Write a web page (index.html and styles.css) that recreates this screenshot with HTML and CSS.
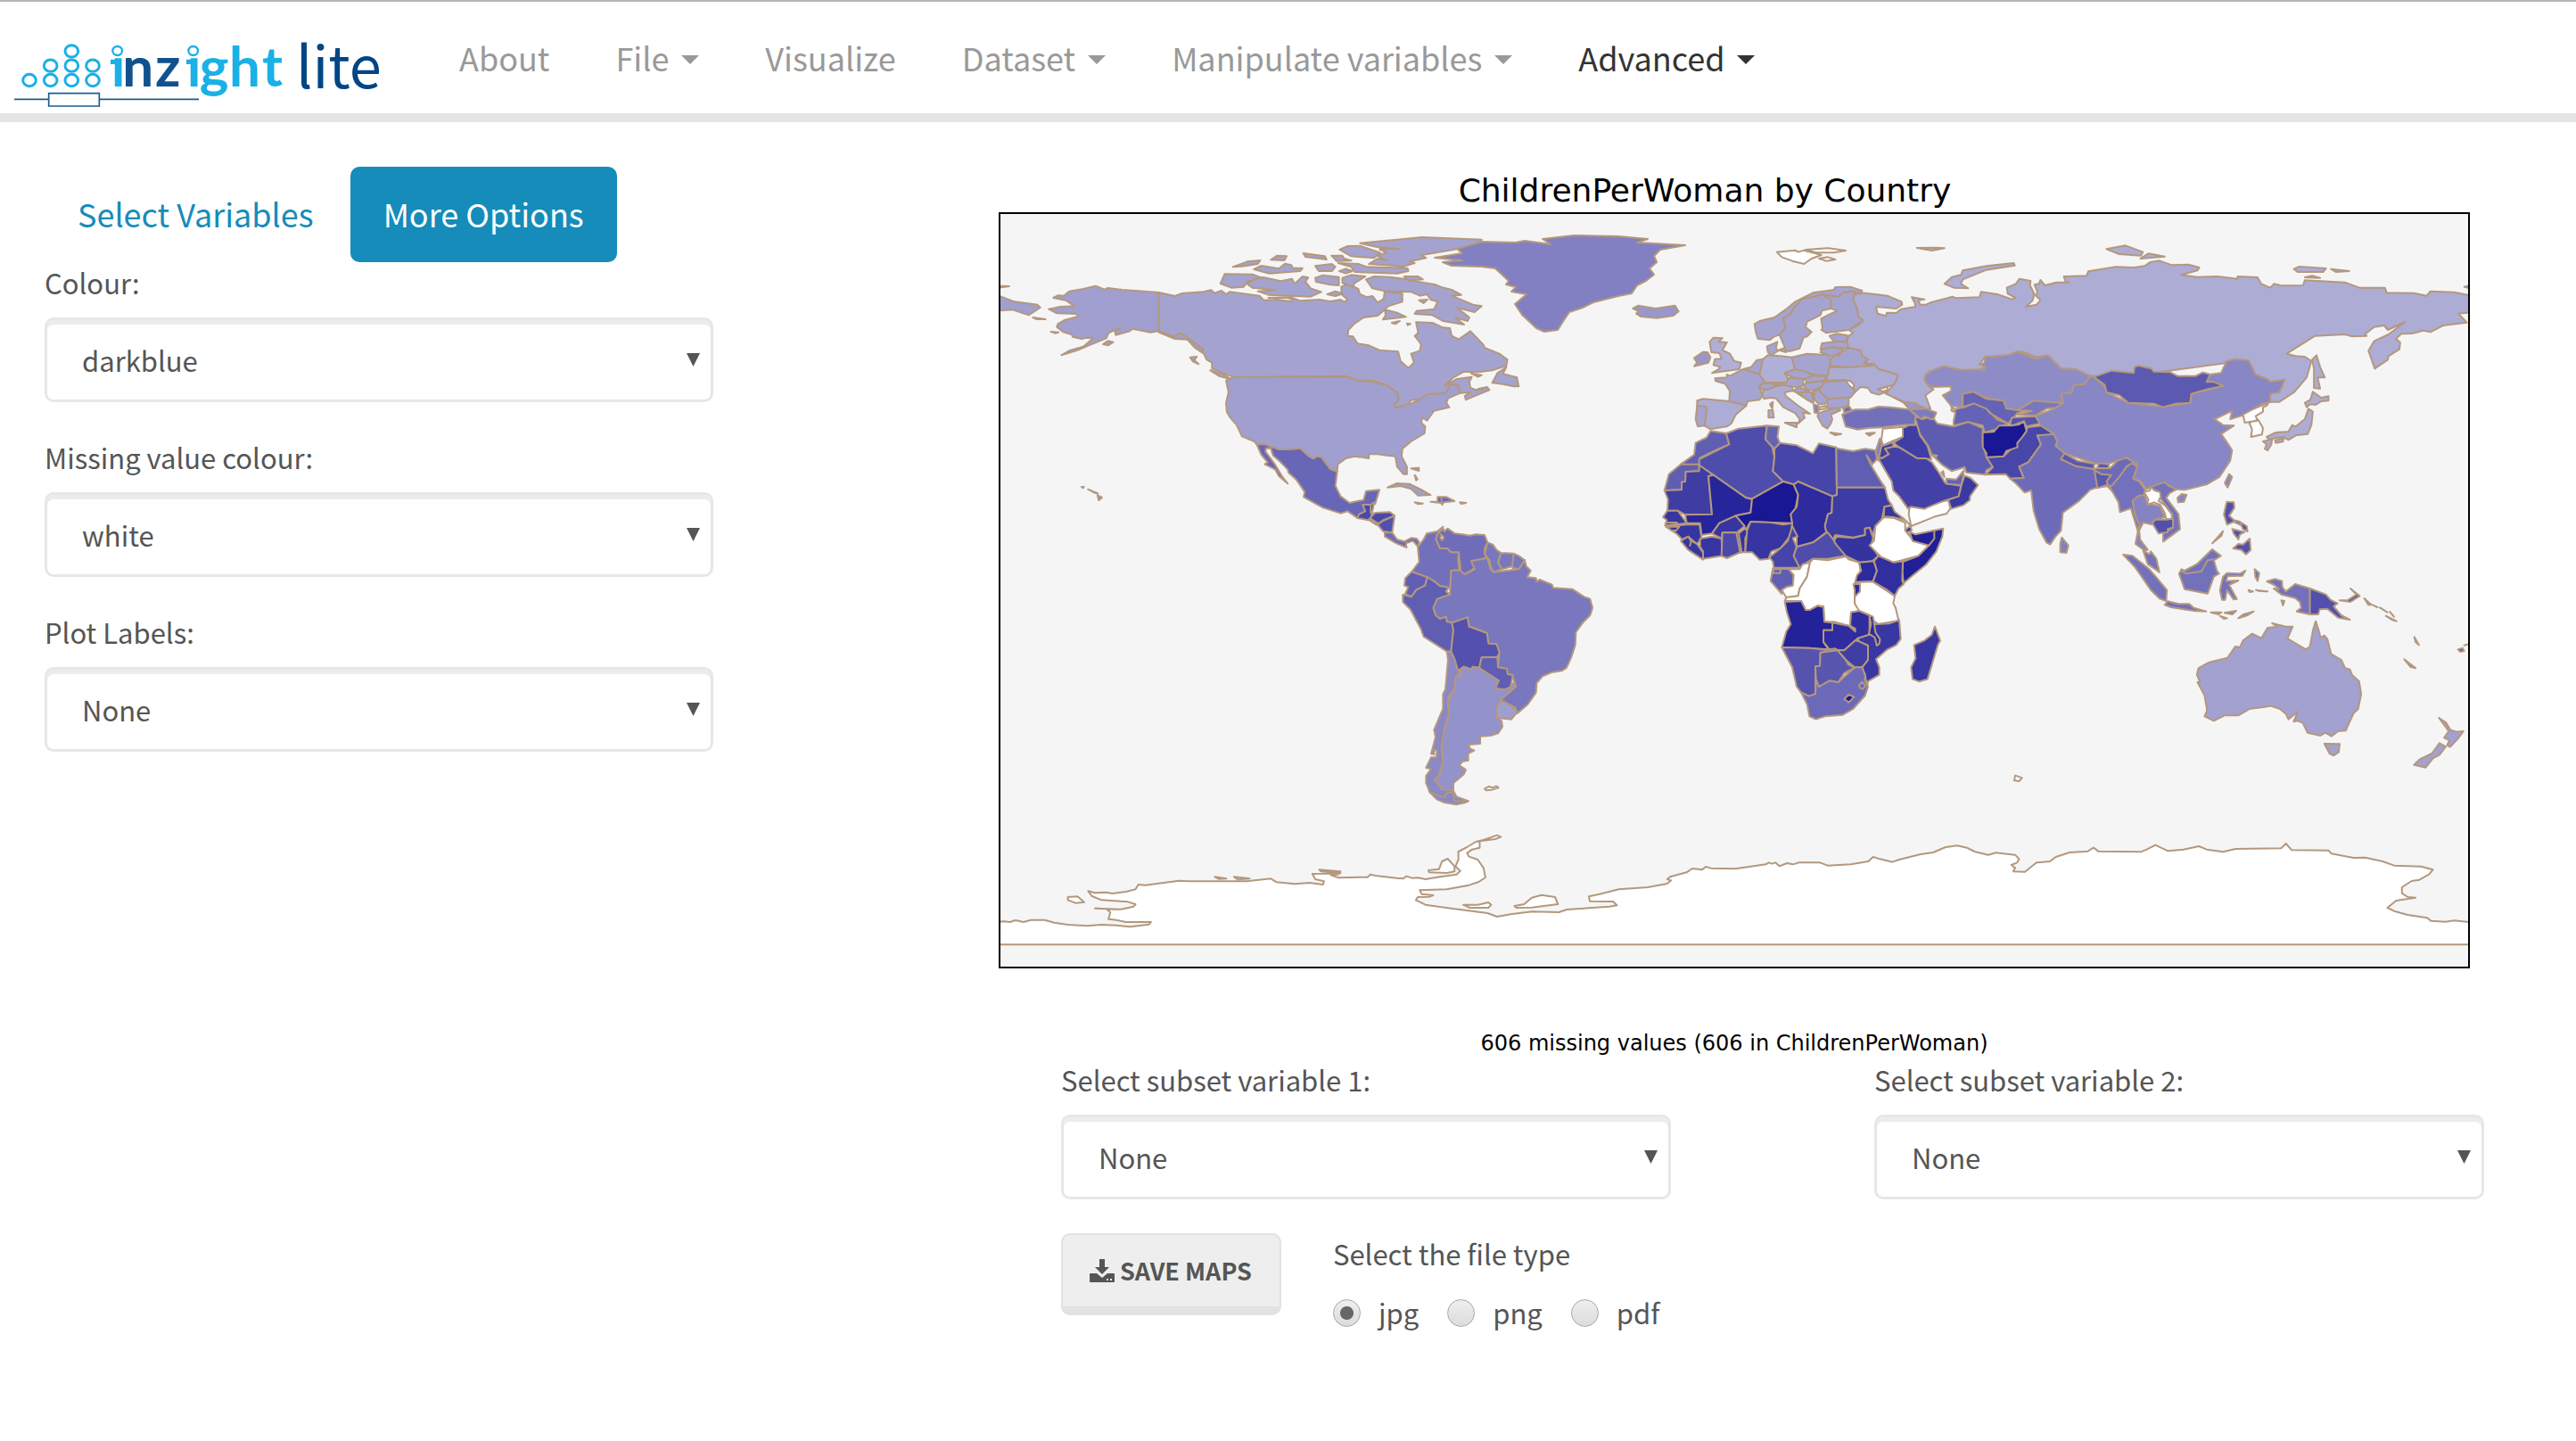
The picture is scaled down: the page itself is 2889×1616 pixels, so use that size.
FILE: index.html
```html
<!DOCTYPE html>
<html lang="en">
<head>
<meta charset="utf-8">
<meta name="viewport" content="width=device-width, initial-scale=1">
<title>iNZight Lite</title>
<link rel="stylesheet" href="styles.css">
</head>
<body>
<header class="navbar">
  <a class="brand" href="#" aria-label="inzight lite home">
    <svg class="brand-logo" viewBox="0 0 1305 285">
      <g fill="none" stroke="#1bb0e6" stroke-width="9">
        <ellipse cx="99" cy="180" rx="22" ry="20"/>
        <ellipse cx="170" cy="180" rx="22" ry="20"/><ellipse cx="170" cy="131" rx="22" ry="20"/>
        <ellipse cx="241" cy="180" rx="22" ry="20"/><ellipse cx="241" cy="131" rx="22" ry="20"/><ellipse cx="241" cy="82" rx="22" ry="20"/>
        <ellipse cx="312" cy="180" rx="22" ry="20"/><ellipse cx="312" cy="131" rx="22" ry="20"/>
      </g>
      <path d="M48 244H164M334 244H669M164 224H334V267H164Z" fill="none" stroke="#1b5b93" stroke-width="5"/>
      <g class="brand-word">
        <text x="374" y="202" fill="#1bb0e6">i</text>
        <text x="412 522" y="202" fill="#12528c">nz</text>
        <text x="629" y="202" fill="#1bb0e6">i</text>
        <text x="671 771 882" y="202" fill="#1bb0e6">ght</text>
      </g>
      <path d="M370 50H425V106H370ZM625 50H672V106H625Z" fill="#fff"/>
      <g fill="#fff" stroke="#1bb0e6" stroke-width="7">
        <ellipse cx="395" cy="81" rx="16" ry="15"/><ellipse cx="650" cy="81" rx="16" ry="15"/>
      </g>
      <path d="M372 110H400V126H372ZM627 110H655V126H627Z" fill="#1bb0e6"/>
      <text class="brand-lite" x="996" y="206" fill="#004684">lite</text>
    </svg>
  </a>
  <nav class="nav">
    <a href="#">About</a>
    <a href="#">File<span class="caret"></span></a>
    <a href="#">Visualize</a>
    <a href="#">Dataset<span class="caret"></span></a>
    <a href="#">Manipulate variables<span class="caret"></span></a>
    <a class="active" href="#">Advanced<span class="caret"></span></a>
  </nav>
</header>

<div class="page">
  <aside class="sidebar">
    <div class="tabs">
      <a href="#">Select Variables</a>
      <a class="active" href="#">More Options</a>
    </div>
    <form class="fields">
      <div class="field">
        <label for="colour">Colour:</label>
        <div class="picker"><select id="colour"><option>darkblue</option></select></div>
      </div>
      <div class="field">
        <label for="missing">Missing value colour:</label>
        <div class="picker"><select id="missing"><option>white</option></select></div>
      </div>
      <div class="field">
        <label for="labels">Plot Labels:</label>
        <div class="picker"><select id="labels"><option>None</option></select></div>
      </div>
    </form>
  </aside>

  <main class="main">
    <svg class="map" viewBox="1120 178 1666 1010" role="img" aria-label="World map of ChildrenPerWoman by Country">
      <defs><clipPath id="frame"><rect x="1121" y="239" width="1648" height="846"/></clipPath></defs>
      <text class="map-title" x="1912" y="226" text-anchor="middle">ChildrenPerWoman by Country</text>
      <rect x="1121" y="239" width="1648" height="846" fill="#f5f5f5"/>
      <g class="land" clip-path="url(#frame)">

        <!-- Antarctica -->
        <g transform="translate(1100 860) scale(1.0842 .33333)" fill="#fff">
          <path d="M10 522 24 520 30 522 36 516 44 522 52 515 66 515 76 524 90 531 110 535 125 531 140 533 154 538 174 530 176 522 150 522 140 515 132 512 134 490 130 478 118 476 145 479 158 470 160 462 152 454 125 448 115 435 111 418 118 424 130 422 136 426 150 420 160 412 163 396 170 398 205 383 215 385 275 385 300 376 306 388 325 394 340 390 354 396 355 385 346 378 343 360 372 358 352 352 350 346 372 352 370 362 362 364 370 373 395 371 400 371 403 362 408 366 430 374 437 376 440 368 446 374 452 373 460 378 475 370 492 362 496 350 491 335 494 312 494 285 503 270 512 252 520 246 534 230 538 236 532 243 516 250 516 272 508 278 503 290 505 302 514 312 520 340 522 372 515 387 505 398 482 412 454 415 456 428 468 432 464 437 452 438 450 448 460 464 490 478 524 492 534 504 548 496 570 487 598 489 606 480 650 470 658 466 654 453 630 452 629 436 640 428 660 412 690 405 710 393 714 382 710 378 713 370 730 355 736 342 746 346 750 336 755 341 780 343 790 338 812 328 815 322 818 326 822 322 826 334 834 324 840 328 846 322 868 322 876 332 900 328 918 318 923 303 930 310 943 320 950 312 972 294 985 288 998 270 1010 265 1020 272 1028 285 1042 296 1050 289 1070 296 1074 310 1072 322 1066 330 1070 340 1068 352 1080 353 1092 322 1106 318 1112 303 1126 288 1145 284 1151 272 1156 284 1200 286 1206 278 1215 263 1228 283 1244 278 1260 267 1268 278 1285 286 1298 276 1345 274 1350 258 1356 280 1394 281 1397 292 1420 306 1432 305 1450 318 1462 332 1490 335 1502 346 1498 362 1488 380 1480 384 1470 405 1470 425 1476 438 1484 440 1464 450 1455 474 1462 485 1476 498 1496 508 1500 518 1515 521 1524 517 1550 526 1550 598 10 598Z"/>
          <path d="M90 438 100 436 107 455 98 458 90 448ZM242 370 254 376 246 377ZM262 370 278 376 266 379ZM463 348 474 344 477 318 483 309 490 335 490 352 482 357 464 355ZM499 464 514 464 525 456 528 464 525 474 506 474ZM552 468 562 462 570 440 580 431 594 438 597 462 570 473 554 474ZM1070 29 1077 37 1074 48 1069 46Z"/>
        </g>

        <!-- Greenland -->
        <path fill="#8280c2" d="M1609 289 1640 284 1634 279 1660 271 1700 272 1710 270 1739 274 1730 268 1765 264 1815 265 1848 268 1836 272 1890 275 1862 280 1855 287 1858 294 1850 301 1855 308 1846 315 1836 320 1830 329 1815 332 1787 339 1775 345 1760 350 1752 362 1747 370 1732 372 1723 368 1707 353 1699 341 1712 330 1695 327 1700 322 1689 319 1692 315 1677 301 1662 299 1628 298 1618 294 1640 292Z"/>

        <!-- North America -->
        <g transform="translate(1120 230) scale(.39541 .33333)">
          <g fill="#a09fcf">
            <path d="M155 312 168 304 185 305 200 290 240 282 275 272 300 284 310 279 350 285 454 294 454 424 430 428 380 416 372 424 332 437 330 425 345 412 312 430 305 448 260 470 225 488 178 505 200 490 240 476 268 448 250 446 235 450 210 443 208 436 185 428 165 410 168 400 185 388 225 375 220 366 165 364 142 350 175 342 215 340 190 320Z"/>
            <path d="M645 590 668 578 985 578 1020 590 1060 594 1100 605 1132 632 1135 655 1122 672 1128 682 1170 668 1195 654 1215 637 1268 632 1282 600 1300 605 1310 632 1275 650 1270 665 1278 680 1235 692 1215 725 1203 715 1198 730 1210 745 1208 768 1170 795 1145 820 1143 845 1158 880 1158 905 1148 905 1130 880 1125 845 1100 842 1075 838 1050 838 1050 852 1010 845 985 852 962 872 960 897 940 888 915 848 905 845 892 853 880 845 855 818 830 822 795 822 755 805 732 805 725 795 690 778 675 740 655 712 647 695 645 665 652 630Z"/>
            <path d="M0 305 45 325 110 335 118 345 85 370 40 352 0 355ZM0 272 30 273 0 278ZM97 378 133 384 108 384ZM148 426 170 428 160 431ZM296 468 310 457 325 461 310 472Z"/>
            <path d="M235 948 242 948 239 952ZM253 956 282 970 272 968ZM280 976 293 984 284 993Z"/>
          </g>
          <g fill="#a4a3d0">
            <path d="M454 294 500 306 520 297 580 292 603 286 612 296 632 288 645 300 655 292 740 305 752 320 790 318 830 324 835 318 820 312 765 312 830 310 855 322 910 318 940 324 970 318 980 326 990 318 972 300 972 275 990 265 1020 282 1025 300 1045 310 1060 306 1075 328 1092 315 1095 290 1145 298 1145 325 1105 340 1095 352 1075 372 1035 378 1010 398 992 420 990 440 1005 442 1018 466 1050 472 1080 488 1133 493 1140 525 1162 548 1178 530 1170 500 1195 490 1198 468 1180 440 1190 430 1184 394 1230 396 1260 412 1280 414 1285 440 1305 452 1338 424 1375 470 1378 480 1420 500 1443 520 1440 540 1400 556 1360 562 1320 560 1290 580 1265 607 1300 585 1342 578 1335 595 1338 615 1355 622 1385 612 1392 622 1355 640 1325 655 1322 642 1340 630 1310 632 1303 605 1282 600 1268 632 1215 637 1195 654 1170 656 1165 668 1128 682 1122 672 1135 655 1132 632 1100 605 1060 590 1020 590 985 575 665 578 605 550 605 530 590 520 580 495 580 485 520 432 495 442 454 424Z"/>
            <path d="M600 556 640 570 658 585 625 575ZM543 512 562 510 555 522 567 535 550 525ZM664 208 705 190 742 186 735 198 690 206ZM772 184 790 170 817 172 810 186ZM724 216 745 204 795 214 812 197 830 202 835 212 862 212 855 222 768 230ZM629 264 641 232 720 233 745 244 705 258 695 275 660 278ZM705 265 722 250 750 243 800 256 832 248 840 265 862 240 878 244 870 258 885 280 915 292 885 308 765 302 735 290 785 286 720 278ZM864 162 925 172 930 183 870 174ZM898 205 945 198 955 208 945 222 908 222ZM898 245 920 236 965 242 965 270 940 268 900 258ZM932 300 955 290 977 298 955 306ZM944 170 975 170 980 180 1000 187 958 188ZM963 195 1020 198 1045 208 1160 212 1162 222 1130 230 1010 225 1000 208ZM966 222 985 214 1003 222 985 230ZM967 150 990 138 1025 137 1082 160 1065 178 1000 172ZM1025 128 1095 120 1125 117 1200 108 1370 116 1365 125 1320 140 1290 150 1200 168 1212 178 1165 190 1180 195 1150 206 1050 198 1075 180 1102 186 1072 170 1100 160 1080 148 1138 148 1070 140ZM975 245 1000 235 1040 240 1010 262 1005 275 975 262ZM1042 250 1065 240 1110 242 1150 248 1190 258 1240 268 1255 276 1285 285 1312 302 1285 305 1345 335 1370 340 1350 360 1300 345 1335 378 1330 390 1295 378 1320 402 1260 390 1230 370 1180 366 1185 356 1235 350 1245 325 1225 318 1215 300 1195 305 1170 292 1100 290 1060 280ZM1150 240 1190 240 1203 250 1165 254ZM1095 352 1130 362 1155 376 1125 380 1090 385 1098 370ZM1115 396 1138 390 1125 400ZM1158 398 1168 400 1160 404ZM1192 320 1216 318 1205 330ZM1440 545 1430 568 1470 580 1475 610 1460 610 1430 602 1400 598 1415 565ZM1340 566 1370 572 1360 578ZM1360 618 1380 615 1370 622Z"/>
          </g>
          <path fill="#a09fcf" d="M454 424 495 442 518 432 580 485 578 497 555 478 535 452 500 450 454 428Z"/>
          <path fill="#6866b6" d="M732 805 755 805 795 822 830 822 855 818 880 845 892 853 905 845 915 848 940 888 960 897 955 945 970 980 995 1002 1035 992 1042 962 1080 958 1068 1005 1055 1008 1033 1008 1040 1030 1022 1045 1018 1053 990 1030 970 1037 920 1018 865 982 868 965 845 925 822 900 820 890 800 865 778 842 772 818 758 818 757 830 770 850 785 875 805 915 820 937 795 912 785 890 755 872 763 865 745 840Z"/>
          <g fill="#4a48a9">
            <path d="M1033 1008 1055 1008 1055 1035 1065 1038 1048 1060 1018 1053 1022 1040 1040 1030ZM1055 1008 1065 1000 1060 1030 1055 1035ZM1058 1040 1070 1035 1110 1033 1123 1045 1090 1060 1078 1072 1055 1055ZM1048 1058 1078 1070 1072 1076Z"/>
            <path fill="#5351ad" d="M1123 1045 1116 1102 1090 1097 1075 1075 1090 1062Z"/>
            <path fill="#6c6ab8" d="M1095 1102 1116 1102 1130 1125 1150 1132 1170 1120 1185 1122 1192 1132 1190 1150 1175 1130 1155 1138 1157 1152 1128 1138 1095 1115Z"/>
            <path fill="#a09fcf" d="M1103 950 1130 936 1165 938 1200 958 1225 975 1190 977 1170 955 1140 945Z"/>
            <path fill="#6c6ab8" d="M1225 998 1245 998 1245 982 1270 982 1293 996 1262 1000 1258 1008 1255 1002ZM1180 1000 1203 1004 1190 1006ZM1308 1000 1326 1002 1312 1005ZM1170 886 1192 884 1192 894ZM1180 908 1188 922 1184 926Z"/>
            <path fill="none" d="M1256 982V1006"/>
          </g>
        </g>

        <!-- South America -->
        <g transform="translate(1540 560) scale(.33333)">
          <path fill="#7270bb" d="M180 115 215 108 235 92 215 120 212 135 225 165 250 165 262 178 288 178 286 205 290 238 262 240 260 298 225 292 205 275 182 262 130 243 155 210 150 160 170 135Z"/>
          <path fill="#6f6dba" d="M215 120 235 97 240 108 250 98 275 115 300 118 325 122 345 118 375 120 385 145 375 165 375 185 384 197 330 208 345 225 330 240 308 252 295 245 288 178 262 178 250 165 225 165 212 135Z"/>
          <path fill="#f5f5f5" d="M228 118 238 128 232 138 226 130Z"/>
          <path fill="#7977bd" d="M385 145 402 152 415 170 430 180 420 210 432 235 405 245 395 225 392 205 375 185ZM430 180 472 182 468 225 435 235 420 215ZM472 182 490 190 510 205 490 235 468 230Z"/>
          <path fill="#7977bd" d="M510 205 515 225 530 240 518 262 548 265 550 277 560 270 602 287 605 298 670 302 710 328 730 335 738 365 730 390 705 415 682 447 680 490 665 535 650 567 635 577 600 582 570 595 550 618 548 650 520 690 485 720 478 700 428 675 480 630 468 590 452 588 450 570 420 565 425 515 415 487 388 485 383 450 320 425 318 397 265 415 248 412 245 395 225 402 210 390 202 365 215 335 258 320 262 240 290 238 308 252 342 235 330 208 384 197 395 235 405 245 490 235Z"/>
          <path fill="#615fb3" d="M130 243 182 262 175 290 145 305 128 328 108 318 118 295 105 290 108 265Z"/>
          <path fill="#605eb2" d="M182 262 205 275 225 292 255 296 245 310 258 320 215 335 202 365 210 390 225 402 245 395 248 412 265 415 270 440 262 512 248 512 170 462 160 435 125 370 100 345 100 320 128 328 145 305 175 290Z"/>
          <path fill="#5351ad" d="M265 415 318 397 322 428 383 450 388 485 415 487 425 515 418 530 365 532 357 567 335 563 330 572 305 563 285 577 270 530 262 512 270 440Z"/>
          <path fill="#8a88c5" d="M248 512 262 512 275 540 285 577 295 580 277 600 275 635 252 665 255 720 240 770 230 830 235 880 220 930 205 945 222 962 230 975 270 980 275 1000 320 1015 310 1020 280 1027 240 1020 215 1010 190 985 185 970 178 955 178 930 195 907 178 903 195 868 212 868 215 845 205 843 205 858 195 856 210 800 205 775 235 705 235 655 243 640 252 540Z"/>
          <path fill="#9492ca" d="M305 563 330 572 335 563 357 567 423 610 412 635 450 640 475 615 480 630 428 675 415 700 415 735 432 745 435 765 420 787 395 795 360 797 360 822 322 825 325 838 340 845 320 855 320 878 300 882 290 895 312 910 305 925 270 955 270 980 230 975 222 960 208 945 222 930 235 880 230 830 240 770 255 720 250 680 275 635 277 600 295 590 295 577Z"/>
          <path fill="#605eb2" d="M365 532 418 530 420 565 450 570 452 588 470 592 462 632 440 640 412 635 423 610 357 567Z"/>
          <path fill="#9f9ece" d="M428 675 465 695 485 715 465 740 415 735 415 700Z"/>
          <path fill="#8a88c5" d="M272 985 280 1000 320 1015 272 1015ZM190 985 240 1003 248 988 272 985"/>
          <path fill="#fff" d="M375 973 390 966 400 970 415 965 422 970 400 977 380 979Z"/>
        </g>

        <!-- East Asia and Siberia -->
        <g transform="translate(2140 240) scale(.40816 .33333)">
          <path fill="#adacd5" d="M400 232 435 238 428 210 490 208 495 193 570 178 620 180 650 175 665 162 690 157 725 172 770 170 800 180 795 190 750 205 795 212 850 210 905 218 905 210 960 213 970 235 995 248 1005 235 1025 241 1085 240 1090 223 1200 230 1240 248 1310 248 1315 265 1390 266 1425 275 1435 260 1500 263 1550 275 1550 330 1512 335 1535 365 1470 375 1435 397 1415 392 1385 402 1355 403 1340 420 1352 432 1350 455 1320 478 1318 490 1282 520 1265 460 1280 428 1320 405 1365 363 1350 372 1318 390 1308 375 1280 380 1255 405 1260 410 1220 412 1200 405 1118 410 1040 470 1065 478 1090 480 1108 495 1095 550 1060 600 1020 632 995 632 985 600 950 540 880 500 640 540 500 545 420 520 300 515"/>
          <g fill="#adacd5">
            <path d="M1122 475 1132 515 1145 550 1125 550 1132 588 1115 585 1115 520 1110 490ZM100 235 120 212 145 205 150 190 215 175 290 165 293 173 215 188 150 220 145 235 165 250 125 248ZM24 114 75 113 100 115 65 123ZM545 118 597 106 645 128 640 140 580 135ZM638 150 660 133 705 143ZM1060 185 1075 177 1148 183 1140 195 1070 195ZM1162 185 1212 192 1175 195ZM1090 213 1110 208 1132 215ZM1528 245 1545 240 1545 250Z"/>
            <path d="M1112 598 1135 618 1155 613 1155 628 1135 630 1120 642 1105 640 1095 650 1090 635 1105 625ZM1100 655 1112 665 1108 710 1098 740 1065 745 1045 760 1030 750 990 758 985 750 1010 735 1045 732 1055 710 1065 715 1090 690ZM975 765 1000 758 998 775 988 795 980 790 985 775ZM1008 762 1032 755 1030 766 1010 770Z"/>
          </g>
          <path fill="#8886c4" d="M500 545 510 548 540 580 545 600 605 635 700 648 775 635 780 605 865 578 820 565 830 540 860 535 875 495 900 488 935 492 955 540 990 557 992 565 1035 557 1020 600 995 605 995 632 970 640 925 675 885 690 890 662 842 690 865 710 895 712 860 740 885 785 890 795 885 830 855 885 820 910 760 928 720 925 705 905 655 925 640 900 620 890 628 840 600 820 550 840 515 840 430 805 405 780 400 740 365 715 350 680 400 655 425 635 420 605 450 600 455 575 485 572Z"/>
          <path fill="#5c5ab0" d="M510 548 560 527 620 535 622 515 632 510 668 520 675 530 720 532 740 545 790 545 810 533 830 540 820 565 840 565 865 578 820 590 778 605 775 635 735 638 700 650 675 638 605 635 580 610 545 600 540 575Z"/>
          <path fill="#8e8cc7" d="M45 545 65 525 100 512 145 523 185 520 210 525 195 508 210 500 210 482 285 472 300 462 350 488 385 475 420 520 460 522 500 545 485 572 455 575 450 600 420 605 425 635 350 632 300 660 270 658 262 628 215 620 180 598 150 605 150 650 118 645 95 610 118 595 118 580 65 582 45 565Z"/>
          <g fill="#6563b5">
            <path d="M150 605 180 598 215 622 262 628 270 655 300 660 335 655 300 670 290 685 275 705 245 692 215 655 180 637 150 652ZM125 695 130 668 118 660 150 650 180 637 215 655 225 670 275 705 240 725 210 735 205 712 165 700 125 712Z"/>
            <path fill="#7977bd" d="M300 660 315 650 345 628 425 637 405 652 380 655 350 678 300 675 340 662Z"/>
            <path fill="#5553ae" d="M285 685 350 680 362 705 325 715 318 697 285 712 280 705Z"/>
          </g>
          <path fill="#5e5cb1" d="M18 680 40 690 65 680 80 705 125 715 165 700 205 720 205 775 215 815 233 850 215 862 212 877 160 870 155 852 120 865 95 845 65 810 55 780 32 740Z"/>
          <path fill="#4846a9" d="M215 818 262 815 300 770 325 730 328 718 365 712 400 740 385 748 355 745 365 775 330 835 305 850 318 888 280 890 268 875 212 877 233 852Z"/>
          <path fill="#191793" d="M205 735 235 733 250 712 285 712 305 708 318 697 325 730 315 748 300 770 300 785 270 797 262 815 215 818 215 805 205 785Z"/>
          <path fill="#6d6bb9" d="M400 740 410 765 405 780 430 805 420 825 460 845 510 858 520 855 555 855 575 830 600 820 628 840 600 850 580 895 560 930 550 915 520 920 500 928 470 965 425 1005 420 1065 405 1085 390 1112 380 1105 360 1060 345 1000 338 930 320 937 295 905 280 890 318 888 305 850 330 835 365 775 355 745Z"/>
          <path fill="#5a58b0" d="M430 805 465 830 512 840 510 858 460 848 420 825ZM520 850 525 838 552 842 550 855 525 855ZM512 862 530 875 558 878 545 900 560 932 545 912 520 922Z"/>
          <path fill="#7371bb" d="M600 850 615 838 630 850 618 890 635 900 650 925 655 940 618 965 630 1010 636 1050 632 1070 612 990 582 1003 578 970 555 920 580 885Z"/>
          <path fill="#8280c1" d="M422 1088 440 1115 435 1140 418 1138 418 1110Z"/>
          <path fill="#fff" d="M920 675 945 658 990 635 985 645 975 650 975 665 955 680 960 695 925 702ZM937 702 962 692 975 720 972 742 942 750 945 725ZM65 810 80 812 75 820ZM118 645 130 660 122 664Z"/>
          <path fill="#8886c4" d="M882 875 890 885 878 920 870 905ZM740 955 752 942 765 945 758 968 742 970Z"/>
        </g>

        <!-- Europe and the Middle East -->
        <g transform="translate(1840 240) scale(.33333)">
          <path fill="#adacd5" d="M1445 230 1400 230 1360 240 1345 222 1340 235 1325 238 1335 262 1330 275 1345 290 1332 305 1296 312 1318 292 1325 270 1310 240 1312 225 1275 218 1262 235 1232 248 1235 268 1262 282 1250 287 1200 270 1145 262 1140 280 1060 283 1050 278 975 298 960 305 940 305 935 290 955 287 912 280 922 298 925 312 875 320 860 333 828 332 825 343 797 335 792 312 860 318 880 305 878 295 830 275 790 270 740 265 720 270 715 290 728 318 732 345 748 358 735 372 700 390 715 400 700 410 693 430 700 450 740 460 745 478 765 490 750 502 785 505 800 522 830 530 865 542 860 560 850 575 825 605 848 615 885 632 920 640 960 655 975 655 958 610 985 590 970 580 955 560 957 543 970 530 1020 512 1080 525 1145 523 1160 515 1140 505 1160 480 1235 475 1270 462 1290 465 1330 482 1370 475 1415 520 1445 520"/>
          <g fill="#a5a4d1">
            <path d="M610 270 640 288 640 318 662 325 630 340 607 352 612 385 608 390 625 400 700 390 748 358 732 345 728 318 715 290 720 262 712 260 680 265 665 278Z"/>
            <path d="M383 370 400 360 450 348 490 320 520 295 580 265 650 255 655 246 705 245 745 258 740 268 712 260 680 265 665 278 610 270 580 280 545 285 520 310 500 340 480 350 488 380 470 405 450 412 435 424 395 420 388 400Z"/>
            <path d="M610 270 640 288 640 318 610 325 605 340 560 362 555 380 575 397 560 412 548 415 535 452 500 462 490 460 468 408 488 380 480 350 500 340 520 310 545 285 580 280Z"/>
            <path d="M425 445 460 430 455 450 462 460 440 475 428 465ZM465 458 485 450 490 465ZM372 515 390 492 412 488 400 540 345 522Z"/>
            <path fill="#b0afd7" d="M232 430 245 416 275 418 262 430 290 432 275 458 300 470 315 495 338 500 332 522 240 535 262 522 268 515 245 508 250 488 272 487 265 468 238 465Z"/>
            <path fill="#9896cc" d="M180 485 210 464 225 465 235 482 228 500 180 512 190 500ZM-26 318 -8 308 50 318 115 308 128 328 110 342 55 350 0 345 -15 335 -5 328Z"/>
            <path d="M250 553 290 550 290 540 300 545 345 522 400 540 418 548 412 570 398 580 410 610 400 625 360 630 355 645 298 630 300 595 285 572 252 562Z"/>
            <path fill="#adacd5" d="M190 628 210 622 298 630 355 645 320 675 305 705 290 715 235 724 215 712 220 650 190 645Z"/>
            <path d="M190 645 220 648 222 660 215 712 192 715 185 690Z"/>
            <path fill="#b0afd7" d="M400 540 405 515 412 488 428 475 470 478 508 482 520 522 485 535 497 555 490 568 418 566Z"/>
            <path d="M508 482 560 470 635 475 645 510 630 545 580 540 520 522Z"/>
            <path d="M485 535 520 522 560 532 580 545 550 555 510 550ZM440 570 490 568 497 552 545 555 548 575 535 582 480 580ZM398 580 412 570 440 570 455 580 430 590 410 590Z"/>
            <path fill="#adacd5" d="M410 610 412 592 430 590 455 580 480 575 510 582 510 595 485 600 488 612 530 645 570 672 545 668 552 685 530 705 535 690 520 670 480 650 455 620 435 618 415 622ZM485 702 525 702 525 718ZM430 660 445 660 448 685 430 685ZM435 640 445 632 443 655Z"/>
            <path d="M510 595 535 582 560 595 585 603 578 635 545 615 520 598ZM545 575 560 568 620 562 610 580 585 592 560 592ZM550 555 580 545 622 545 620 560 560 568ZM580 595 600 592 630 625 620 640 600 640 585 625ZM628 622 700 618 700 640 680 652 630 655ZM620 565 690 560 715 580 725 595 705 618 630 622 610 605 600 590ZM598 670 628 660 660 652 672 660 640 675 645 690 640 705 628 722 612 712 595 680Z"/>
            <path d="M530 600 575 600 582 635 560 625Z"/>
            <path fill="#8280c1" d="M582 640 598 645 598 670 585 668Z"/>
            <path fill="#adacd5" d="M635 515 700 515 785 505 800 522 830 530 865 542 860 560 850 575 800 588 830 598 800 608 775 600 765 585 740 582 720 600 715 575 690 558 625 560Z"/>
            <path d="M635 510 645 480 680 462 700 450 740 460 745 478 765 490 750 502 780 510 700 515ZM635 410 660 403 695 408 693 430 650 428ZM605 455 610 435 650 430 693 430 698 452 640 448ZM610 455 640 448 680 455 670 475 640 478 605 465Z"/>
          </g>
          <g fill="#fff">
            <path d="M458 128 520 122 530 128 550 122 608 138 575 150 550 168 510 158 475 145ZM555 120 630 115 690 123 650 130 590 130ZM600 150 630 145 655 153 625 158ZM690 560 705 562 718 575 715 588 700 575ZM600 650 625 646 622 655 602 658ZM797 590 830 582 832 592 815 597Z"/>
            <path d="M815 722 885 716 882 750 845 765 815 778 810 760ZM905 985 955 985 985 975 1035 962 1042 990 1030 1008 990 1018 960 1030 910 1050 902 1010Z"/>
          </g>
          <path fill="#9896cc" d="M848 615 885 632 920 635 960 655 905 658 885 635Z"/>
          <path fill="#7d7bbf" d="M905 658 960 655 995 668 985 690 975 690 955 680 945 690 925 675Z"/>
          <path fill="#7270bb" d="M678 675 720 658 765 658 800 648 840 650 905 658 925 678 922 708 880 710 810 718 765 720 730 725 690 715ZM682 655 700 645 712 662 685 668ZM638 735 675 740 655 744ZM758 738 788 736 770 746Z"/>
          <path fill="#403ea5" d="M882 720 905 710 930 710 940 745 965 780 978 825 930 822 870 785 850 770 882 750ZM800 785 848 768 852 785 830 795 835 808 810 822 795 818Z"/>
          <path fill="#8280c1" d="M805 755 812 770 800 830 790 800Z"/>
          <path fill="#4341a7" d="M798 820 812 822 835 808 822 790 852 782 870 785 930 822 960 822 980 835 1000 865 1025 905 1078 915 1070 950 1020 965 970 985 955 992 908 985 900 992 870 950 850 930 845 900Z"/>
          <path fill="#6563b5" d="M1028 890 1062 893 1088 862 1080 912 1030 908ZM1012 870 1018 865 1022 885Z"/>
          <path fill="#3a38a3" d="M1090 880 1110 888 1135 912 1108 950 1108 962 1085 980 1045 992 1035 962 1070 950 1080 910Z"/>
        </g>

        <!-- Africa -->
        <g transform="translate(1840 460) scale(.33333)">
          <path fill="#605eb2" d="M235 70 288 78 298 115 262 130 200 160 197 182 135 182 180 150 185 110 222 92ZM135 182 197 182 197 205 152 207 150 240 138 242 138 268 80 270 95 215Z"/>
          <path fill="#4f4dab" d="M288 78 330 62 425 52 420 98 443 125 450 160 445 205 480 240 375 298 355 295 197 188 197 165 298 115Z"/>
          <path fill="#6563b5" d="M425 52 465 55 460 90 468 110 450 130 420 98Z"/>
          <path fill="#4745a8" d="M450 130 470 110 525 118 580 145 600 112 658 125 660 285 645 290 530 240 515 250 480 240 445 205 450 160Z"/>
          <path fill="#605eb2" d="M658 128 715 138 755 130 790 135 795 165 780 182 760 152 775 185 805 235 822 260 660 260Z"/>
          <path fill="#3f3da4" d="M152 207 197 205 197 185 245 218 228 222 240 350 150 352 125 338 90 338 92 300 80 270 138 268 138 242 150 240Z"/>
          <path fill="#27259b" d="M245 218 355 295 375 300 370 345 320 355 265 380 240 415 205 420 200 380 155 380 150 352 240 350 228 222Z"/>
          <path fill="#191793" d="M375 298 480 240 515 250 530 285 520 335 505 350 510 380 440 378 370 375 355 400 325 370 320 355 370 345Z"/>
          <path fill="#2d2b9d" d="M515 250 530 240 645 290 643 345 630 350 620 390 625 410 580 445 525 460 525 430 510 415 510 380 505 350 525 325 530 285Z"/>
          <path fill="#3d3ba4" d="M660 260 822 260 832 300 845 320 820 325 812 365 790 390 780 420 770 395 755 398 755 420 715 428 655 420 645 440 625 410 620 390 630 350 643 345 645 290 660 285Z"/>
          <path fill="#3735a1" d="M820 325 845 320 855 342 885 365 908 388 890 370 850 360 818 358ZM888 405 908 388 912 405 895 412Z"/>
          <path fill="#3735a1" d="M75 360 90 338 125 338 155 380 82 388 88 370ZM85 392 155 385 198 385 205 430 190 450 160 425 140 435 120 415ZM135 440 160 425 170 440 190 450 210 480 210 503 160 470ZM200 432 240 425 272 432 275 490 210 500 210 475 200 460ZM240 415 265 380 320 355 350 390 325 410 275 412 272 432Z"/>
          <path fill="none" d="M82 378 125 378M85 392 130 392 120 405 100 405M160 425 170 440 165 458"/>
          <path fill="#4a48a9" d="M275 412 322 412 335 478 290 498 272 490ZM322 412 340 410 340 478 335 480Z"/>
          <path fill="#3533a0" d="M330 415 350 398 362 410 352 430 352 478 340 478Z"/>
          <path fill="#3735a1" d="M358 405 370 375 440 378 480 385 510 380 505 420 470 465 440 475 430 500 400 503 375 478 352 478Z"/>
          <path fill="#4644a8" d="M510 390 528 425 512 430 525 460 515 490 535 530 448 530 445 510 433 495 470 465 495 440Z"/>
          <path fill="#4f4dab" d="M525 460 580 445 628 410 660 450 690 490 630 500 580 500 560 512 535 530 515 490Z"/>
          <path fill="#3533a0" d="M650 440 660 425 715 430 755 420 755 398 770 395 782 430 775 455 800 490 780 508 735 512 690 490 660 455Z"/>
          <path fill="#605eb2" d="M445 532 500 535 515 555 512 590 475 605 475 618 437 575ZM448 535 470 535 470 548 445 548Z"/>
          <g fill="#fff">
            <path d="M818 360 850 362 890 378 890 405 915 435 970 455 935 490 880 505 850 512 810 495 770 455 785 440 790 390Z"/>
            <path d="M498 535 535 535 545 518 570 512 560 560 535 600 530 625 490 630 475 605 490 595 512 590 515 555Z"/>
            <path d="M570 512 580 500 630 505 690 492 700 502 735 512 740 540 722 580 720 650 738 675 708 680 705 725 722 735 722 745 700 725 650 712 618 712 615 660 595 658 570 672 555 672 540 642 485 642 490 630 530 625 535 600 560 560Z"/>
            <path d="M722 578 782 577 855 625 850 650 858 665 868 708 800 720 785 710 770 690 735 675 720 650Z"/>
          </g>
          <path fill="#201f98" d="M905 410 925 418 1018 398 1015 425 995 475 960 520 910 560 885 582 880 545 882 510 935 490 970 455 915 440Z"/>
          <path fill="none" d="M988 405V432L970 455"/>
          <path fill="#2c2a9d" d="M735 512 785 508 795 540 782 575 722 578 728 555 742 540ZM716 585 738 585 738 610 720 628 720 605Z"/>
          <path fill="#312f9f" d="M785 508 800 490 850 512 882 508 880 575 885 585 868 600 855 625 830 605 782 577 795 540Z"/>
          <path fill="#242299" d="M485 645 540 642 555 672 570 672 595 658 615 662 618 712 645 715 645 740 615 740 615 780 632 805 565 800 475 798 490 745 505 720 492 680Z"/>
          <path fill="#2e2c9e" d="M645 740 645 715 700 725 722 745 722 735 705 725 708 680 735 675 770 690 770 755 730 768 685 808 635 805 615 780 615 740Z"/>
          <path fill="#3937a3" d="M790 720 835 718 870 706 875 770 860 790 830 805 792 838 803 865 803 890 765 912 762 930 755 890 745 865 765 840 765 792 735 778 730 768 770 755 788 760 795 792 805 775 790 750 780 700Z"/>
          <path fill="#2c2a9d" d="M770 690 782 695 790 748 805 770 803 785 795 792 788 765 768 752 775 720Z"/>
          <path fill="#403ea5" d="M662 808 685 808 722 775 735 778 765 792 765 840 745 865 720 865 690 840Z"/>
          <path fill="#5553ae" d="M475 798 565 800 620 806 655 802 662 808 605 815 603 860 588 862 588 955 565 962 540 950 525 930 510 865Z"/>
          <path fill="#6c6ab8" d="M540 950 565 962 588 955 590 905 600 930 635 910 665 915 720 865 745 865 755 890 755 910 765 930 755 960 715 1005 680 1025 620 1030 590 1040 568 1030 560 990Z"/>
          <path fill="#5856af" d="M605 815 662 808 690 840 698 855 720 867 685 885 665 915 635 910 600 930 590 905 588 862 603 860Z"/>
          <path fill="#191793" d="M685 972 700 957 718 965 700 983Z"/>
          <path fill="#6c6ab8" d="M735 925 745 914 757 928 748 938 737 934Z"/>
          <path fill="#3836a2" d="M990 728 1008 775 1000 790 965 905 938 913 915 905 910 865 925 835 920 790 955 775 980 755Z"/>
        </g>

        <!-- South-East Asia and Oceania -->
        <g transform="translate(2240 480) scale(.34438 .33333)">
          <path fill="#8583c2" d="M440 245 460 228 480 225 490 255 530 262 545 300 510 310 505 325 475 318 462 345 465 375 490 410 480 412 450 390 462 325 448 290Z"/>
          <path fill="#7371bb" d="M495 200 545 182 555 192 582 207 560 220 550 235 590 290 595 340 540 382 540 355 572 335 570 290 530 235 525 215Z"/>
          <path fill="#fff" d="M478 215 497 210 500 198 512 210 530 215 532 232 525 245 548 262 568 290 568 308 550 305 545 285 530 258 510 250 488 258 492 240Z"/>
          <path fill="#5250ac" d="M505 320 515 308 550 308 572 305 572 335 555 340 555 350 525 355Z"/>
          <g fill="#7371bb">
            <path d="M475 412 495 425 500 415 518 440 528 485 490 458ZM410 426 440 430 495 475 520 505 552 545 550 582 530 575 500 545 450 470ZM545 595 555 583 590 592 625 592 640 605 680 617 640 615 565 603ZM592 490 600 475 610 480 650 458 700 408 728 430 705 445 715 480 722 490 705 500 685 557 610 542ZM735 500 748 488 790 490 808 480 798 497 750 498 745 515 785 513 755 528 780 575 770 577 748 545 742 578 732 578 725 545ZM838 475 853 488 848 515 840 500ZM818 545 833 550 822 552ZM842 545 880 550 850 548ZM695 620 730 620 720 627ZM740 622 778 615 765 627ZM725 632 748 640 738 642ZM785 640 800 628 835 617 815 630ZM925 580 935 582 930 597Z"/>
            <path d="M878 516 905 508 927 515 928 535 940 550 970 525 1018 540 1018 627 975 617 990 605 985 585 970 572 925 560 900 540 918 542 905 530Z"/>
            <path fill="none" d="M600 482 615 490 665 482 685 445 705 442"/>
          </g>
          <g fill="#5250ac">
            <path d="M1018 540 1070 560 1085 578 1108 590 1095 600 1120 630 1148 645 1110 638 1075 608 1050 610 1045 627 1018 627ZM1115 580 1140 580 1170 560 1150 540 1180 565 1150 585ZM1195 573 1218 595 1208 595ZM1222 595 1238 603ZM1246 604 1270 620ZM1278 618 1292 635ZM1265 632 1300 650 1285 645ZM1358 703 1373 730 1362 720ZM1325 778 1362 808 1345 803ZM1500 745 1515 740 1520 750 1508 753ZM1518 732 1536 727"/>
            <path d="M747 248 770 250 772 268 755 295 770 310 790 315 795 328 770 315 748 325 738 290ZM790 315 812 330 815 348 800 340ZM765 340 805 350 790 358 785 375 770 355ZM700 388 735 347 730 362ZM768 405 785 390 800 392 822 372 825 410 810 425 795 410Z"/>
          </g>
          <g fill="#a2a1d0">
            <path d="M1037 650 1045 675 1053 705 1065 698 1075 710 1087 760 1120 780 1133 808 1148 812 1155 830 1178 852 1185 895 1175 945 1160 960 1140 1005 1135 1018 1110 1020 1088 1037 1068 1025 1052 1035 1010 1025 995 992 978 985 965 988 978 955 948 980 940 962 920 945 890 935 860 940 822 945 785 967 740 967 705 985 675 970 683 950 675 900 652 855 660 855 650 830 655 808 690 788 750 773 775 735 790 738 800 715 830 692 860 707 880 672 912 668 895 657 940 668 962 668 945 708 1005 745 1018 735 1028 680Z"/>
            <path d="M1065 1062 1115 1063 1112 1090 1095 1102 1082 1095ZM1438 975 1462 992 1475 1015 1495 1022 1518 1020 1500 1045 1475 1073 1465 1068 1472 1050 1455 1042 1470 1020ZM1440 1060 1460 1072 1440 1100 1420 1110 1395 1142 1357 1133 1375 1115 1415 1095Z"/>
          </g>
        </g>
      </g>
      <rect x="1121" y="239" width="1648" height="846" fill="none" stroke="#000" stroke-width="2"/>
      <text class="map-note" x="1945" y="1178" text-anchor="middle">606 missing values (606 in ChildrenPerWoman)</text>
    </svg>

    <form class="controls">
      <div class="subsets">
        <div class="field">
          <label for="subset1">Select subset variable 1:</label>
          <div class="picker"><select id="subset1"><option>None</option></select></div>
        </div>
        <div class="field">
          <label for="subset2">Select subset variable 2:</label>
          <div class="picker"><select id="subset2"><option>None</option></select></div>
        </div>
      </div>
      <div class="save-row">
        <button type="button" class="save">
          <svg class="save-icon" viewBox="0 0 28 26" aria-hidden="true"><path fill="#555" fill-rule="evenodd" d="M11 0H17V9H22L14 17L6 9H11ZM1 16H8L14 21L20 16H27Q28 16 28 17V25Q28 26 27 26H1Q0 26 0 25V17Q0 16 1 16ZM19 22V24H21V22ZM23 22V24H25V22Z"/></svg>
          <span>SAVE MAPS</span>
        </button>
        <fieldset class="filetype">
          <legend>Select the file type</legend>
          <div class="radios">
            <label><input type="radio" name="type" checked>jpg</label>
            <label><input type="radio" name="type">png</label>
            <label><input type="radio" name="type">pdf</label>
          </div>
        </fieldset>
      </div>
    </form>
  </main>
</div>
</body>
</html>
```
FILE: styles.css
```css
* { box-sizing: border-box; }

body {
  margin: 0;
  background: #fff;
  color: #555;
  font-family: "Noto Sans CJK SC", "Noto Sans", sans-serif;
  font-size: 31px;
  line-height: 46px;
}

a { text-decoration: none; }

.navbar {
  display: flex;
  align-items: flex-start;
  height: 137px;
  border-top: 2px solid #b5b5b5;
  border-bottom: 10px solid #e5e5e5;
}

.brand { margin-top: 28px; }

.brand-logo {
  display: block;
  width: 435px;
  height: 95px;
  overflow: visible;
}

.brand-word { font: bold 186px Lato, sans-serif; }
.brand-lite { font: 400 195px "Noto Sans CJK SC", sans-serif; }

.nav {
  display: flex;
  margin: 38px 0 0 43px;
}

.nav a {
  display: flex;
  align-items: center;
  gap: 14px;
  padding: 0 37px;
  color: #999;
  font-size: 36px;
  line-height: 48px;
  white-space: nowrap;
}

.nav a.active { color: #333; }

.caret {
  margin-top: 6px;
  border: 10px solid transparent;
  border-top-color: currentColor;
  border-bottom: 0;
}

.page {
  display: grid;
  grid-template-columns: 1fr 2fr;
}

.sidebar { padding: 50px 163px 0 50px; }

.tabs {
  display: flex;
  gap: 4px;
}

.tabs a {
  padding: 28px 37px 31px;
  border-radius: 10px;
  color: #158cba;
  font-size: 36px;
  line-height: 48px;
  white-space: nowrap;
}

.tabs a.active {
  background: #158cba;
  color: #fff;
}

.fields {
  display: grid;
  gap: 39px;
}

.field {
  display: grid;
  gap: 16px;
}

.picker { position: relative; }

.picker::after {
  content: "";
  position: absolute;
  top: 40px;
  right: 15px;
  width: 15px;
  height: 15px;
  background: #555;
  clip-path: polygon(0 0, 100% 0, 50% 100%);
  pointer-events: none;
}

.picker select {
  display: block;
  width: 100%;
  height: 95px;
  padding: 0 39px;
  appearance: none;
  background: #fff;
  border: 3px solid #e7e7e7;
  border-radius: 10px;
  box-shadow: inset 0 5px 0 #ececec;
  color: #555;
  font: inherit;
}

.main { padding: 41px 103px 80px 157px; }

.map {
  display: block;
  width: 100%;
}

.land {
  stroke: #b3987e;
  stroke-width: 2;
  stroke-linejoin: round;
}

.land path { vector-effect: non-scaling-stroke; }

.map-title { font: 36px "DejaVu Sans", sans-serif; }
.map-note { font: 24px "DejaVu Sans", sans-serif; }

.controls { padding-left: 70px; }

.subsets {
  display: grid;
  grid-template-columns: 3fr 3fr;
  gap: 14.2857%;
}

.save-row {
  display: flex;
  align-items: flex-start;
  gap: 58px;
  margin-top: 38px;
}

.save {
  display: flex;
  align-items: center;
  gap: 6px;
  height: 92px;
  padding: 0 31px 0 30px;
  background: #eee;
  border: 2px solid #e2e2e2;
  border-bottom-width: 10px;
  border-radius: 10px;
  color: #555;
  font: bold 27px/40px "Noto Sans CJK SC", sans-serif;
  white-space: nowrap;
}

.save-icon {
  width: 28px;
  height: 26px;
}

.filetype {
  margin: 0;
  padding: 0;
  border: 0;
}

.filetype legend { padding: 0; }

.radios {
  display: flex;
  gap: 32px;
  margin-top: 20px;
}

.radios label {
  display: flex;
  align-items: center;
  gap: 20px;
}

.radios input {
  width: 31px;
  height: 31px;
  margin: 0;
  appearance: none;
  border: 1px solid #a8a8a8;
  border-radius: 50%;
  background: linear-gradient(#eee, #dcdcdc);
}

.radios input:checked {
  background: radial-gradient(circle, #666 0 7px, transparent 8px), linear-gradient(#eee, #dcdcdc);
}
```
